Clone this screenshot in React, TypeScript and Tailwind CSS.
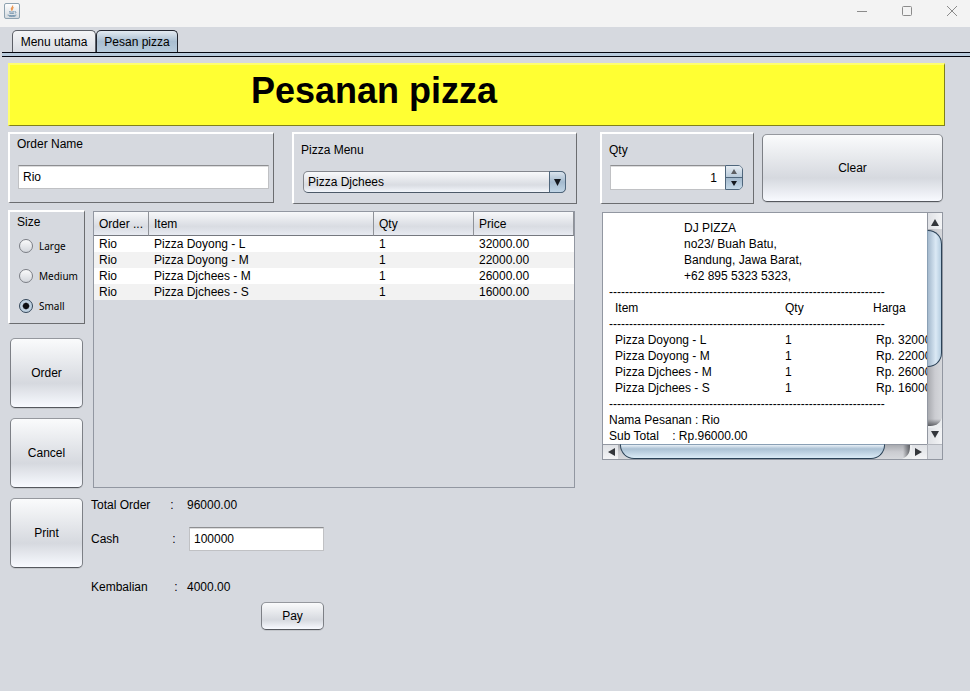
import { useState } from "react";
import type { ReactNode } from "react";

type Line = { item: string; price: string };

const lines: Line[] = [
  { item: "Pizza Doyong - L", price: "32000.00" },
  { item: "Pizza Doyong - M", price: "22000.00" },
  { item: "Pizza Djchees - M", price: "26000.00" },
  { item: "Pizza Djchees - S", price: "16000.00" },
];

const raised =
  "border-t-2 border-l-2 border-r border-b border-t-white border-l-white border-r-[#6b6d70] border-b-[#6b6d70]";

const field =
  "h-6 border border-[#c0c1c4] border-t-[#8d8e91] bg-white px-1 text-[12px] shadow-[inset_0_1px_0_#dcdcdd] outline-none";

function NimbusButton({ children, className }: { children: ReactNode; className: string }) {
  return (
    <button
      type="button"
      className={
        "rounded-[5px] border border-[#7d8086] border-t-[#95989e] border-b-[#55585e] bg-linear-to-b from-[#fafbfc] via-[#d6d9df] via-65% to-[#f8faff] shadow-[0_1px_0_#c3c6cb] " +
        className
      }
    >
      {children}
    </button>
  );
}

function JavaIcon() {
  return (
    <svg width="16" height="16" viewBox="0 0 16 16" aria-hidden="true">
      <defs>
        <linearGradient id="frame" x1="0" y1="0" x2="0" y2="1">
          <stop offset="0" stopColor="#ffffff" />
          <stop offset="1" stopColor="#d3d9de" />
        </linearGradient>
      </defs>
      <rect x=".5" y=".5" width="15" height="15" rx="1.5" fill="url(#frame)" stroke="#8ea2b0" />
      <path d="M8.6 2.4c.9 1.6-2.4 2.3-1.1 4.3.2.5.5.8.5.8M9.6 4.5c-1.6.9-1.8 1.5-.9 2.8" fill="none" stroke="#eb9550" strokeWidth="1.1" />
      <path d="M5 8.7c1.8.5 3.8.5 5.4 0M5.4 10.2c1.5.4 3.2.4 4.6 0M10.8 8.7c1.8-.2 1.6 1.1.1 1.6M3.6 12c2.4.9 6.2.9 8.8 0M5 13.2c2.3.3 4.6.3 6.4 0" fill="none" stroke="#6d8fa9" strokeWidth=".9" />
    </svg>
  );
}

function TitleBar() {
  return (
    <header className="flex h-[27px] items-start justify-between bg-[#f3f3f3] pt-[3px] pr-[13px] pl-1">
      <JavaIcon />
      <div className="flex gap-[35px] pt-[3px] text-[#8b8b8b]">
        <button type="button" aria-label="Minimize">
          <svg width="10" height="10" viewBox="0 0 10 10" stroke="currentColor"><path d="M0 5.5h10" /></svg>
        </button>
        <button type="button" aria-label="Maximize">
          <svg width="10" height="10" viewBox="0 0 10 10" fill="none" stroke="currentColor"><rect x=".5" y=".5" width="9" height="9" rx="1" /></svg>
        </button>
        <button type="button" aria-label="Close">
          <svg width="10" height="10" viewBox="0 0 10 10" stroke="currentColor"><path d="M0 0l10 10M10 0L0 10" /></svg>
        </button>
      </div>
    </header>
  );
}

function Tabs() {
  return (
    <nav className="pl-0.5">
      <div className="flex pt-[3px] pl-2.5" role="tablist">
        <button type="button" role="tab" aria-selected="false" className="h-[22px] w-[84px] rounded-t-[5px] border border-b-0 border-[#5b5e66] bg-linear-to-b from-[#f4f5f7] to-[#dadde3]">
          Menu utama
        </button>
        <button type="button" role="tab" aria-selected="true" className="h-[22px] w-[82px] rounded-t-[5px] border border-b-0 border-[#20242e] bg-linear-to-b from-[#e3eaf1] via-[#a9bed1] via-50% to-[#b8cbdc]">
          Pesan pizza
        </button>
      </div>
      <div className="h-[5px] border-y border-[#05060f] bg-[#b9cbdc]" />
    </nav>
  );
}

function SizePanel() {
  const [size, setSize] = useState("Small");
  return (
    <fieldset className={"h-[114px] pl-[7px] " + raised}>
      <legend className="float-left mt-[2px] w-full leading-4">Size</legend>
      <div className="clear-both flex flex-col gap-4 pt-[9px] pl-0.5">
        {["Large", "Medium", "Small"].map((s) => (
          <label key={s} className="flex h-3.5 items-center gap-1.5 font-['Noto_Sans',sans-serif] text-[10px]">
            <input
              type="radio"
              name="size"
              checked={size === s}
              onChange={() => setSize(s)}
              className="size-3.5 shrink-0 appearance-none rounded-full border border-[#7b7e85] bg-linear-to-b from-[#fafafb] to-[#d4d7dd] checked:border-[#34475a] checked:bg-radial checked:from-[#0b0d12] checked:from-30% checked:to-[#bfd1e1] checked:to-45%"
            />
            {s}
          </label>
        ))}
      </div>
    </fieldset>
  );
}

function OrderTable() {
  const head = "border-b border-[#75787f] pl-[5px] text-left font-normal";
  const divider = " border-r border-r-[#8f9298]";
  return (
    <div className="h-[277px] border border-[#9297a1]">
      <table className="w-full table-fixed border-separate border-spacing-0">
        <colgroup>
          <col className="w-[55px]" />
          <col />
          <col className="w-[100px]" />
          <col className="w-[100px]" />
        </colgroup>
        <thead>
          <tr className="h-6 bg-linear-to-b from-[#f7f8fa] via-[#d9dce2] via-60% to-[#e9ecf3]">
            <th className={head + divider}>Order ...</th>
            <th className={head + divider}>Item</th>
            <th className={head + divider}>Qty</th>
            <th className={head + divider}>Price</th>
          </tr>
        </thead>
        <tbody>
          {lines.map((l) => (
            <tr key={l.item} className="h-4 bg-white leading-4 even:bg-[#f2f2f2]">
              <td className="pl-[5px]">Rio</td>
              <td className="pl-[5px]">{l.item}</td>
              <td className="pl-[5px]">1</td>
              <td className="pl-[5px]">{l.price}</td>
            </tr>
          ))}
        </tbody>
      </table>
    </div>
  );
}

function PaymentForm() {
  return (
    <form className="-ml-0.5 grid w-[233px] grid-cols-[96px_1fr] items-center">
      <span className="h-[34px] whitespace-pre leading-[34px]">{"Total Order" + " ".repeat(6) + ":"}</span>
      <output className="leading-[34px]">96000.00</output>
      <label htmlFor="cash" className="h-[34px] whitespace-pre leading-[34px]">{"Cash" + " ".repeat(16) + ":"}</label>
      <input id="cash" defaultValue="100000" className={"ml-0.5 min-w-0 " + field} />
      <span className="h-[62px] whitespace-pre leading-[62px]">{"Kembalian" + " ".repeat(8) + ":"}</span>
      <output className="leading-[62px]">4000.00</output>
      <NimbusButton className="col-span-2 -mt-4 h-7 w-[63px] justify-self-end">Pay</NimbusButton>
    </form>
  );
}

function Arrow({ d }: { d: string }) {
  return (
    <svg width="15" height="16" viewBox="0 0 15 16" fill="#33363b" className="shrink-0" aria-hidden="true">
      <path d={d} />
    </svg>
  );
}

function Rule() {
  return <div>{"-".repeat(69)}</div>;
}

function Receipt() {
  const row = "grid grid-cols-[170px_88px_1fr] pl-1.5";
  return (
    <section aria-label="Receipt" className="mx-0.5 grid h-[248px] grid-cols-[minmax(0,1fr)_15px] grid-rows-[minmax(0,1fr)_15px] border border-[#9297a1]">
      <div className="overflow-hidden bg-white pt-[7px] pl-1.5 leading-4 whitespace-nowrap">
        <div className="pl-[75px]">
          <div>DJ PIZZA</div>
          <div>no23/ Buah Batu,</div>
          <div>Bandung, Jawa Barat,</div>
          <div>+62 895 5323 5323,</div>
        </div>
        <Rule />
        <div className={row}>
          <span>Item</span>
          <span>Qty</span>
          <span>Harga</span>
        </div>
        <Rule />
        {lines.map((l) => (
          <div key={l.item} className={row}>
            <span>{l.item}</span>
            <span>1</span>
            <span className="pl-[3px]">Rp. {l.price}</span>
          </div>
        ))}
        <Rule />
        <div>Nama Pesanan : Rio</div>
        <div className="whitespace-pre">{"Sub Total    : Rp.96000.00"}</div>
      </div>

      {/* vertical scroll bar */}
      <div className="flex flex-col border-l border-[#9297a1] bg-linear-to-r from-[#dfe1e5] to-[#f3f4f6]">
        <Arrow d="M7 6l4 7H3z" />
        <div className="flex flex-1 flex-col bg-linear-to-r from-[#a9abb0] via-[#cbccd1] via-50% to-[#d6d8dc]">
          <div className="mt-px -ml-px h-[137px] rounded-r-[14px] border border-[#2b4257] border-l-[#8aa0b5] bg-linear-to-r from-[#a4b9cd] via-[#dbe9f5] via-60% to-[#b5cde0]" />
          <div className="flex-1" />
          <svg width="14" height="14" viewBox="0 0 14 14" className="shrink-0" aria-hidden="true">
            <defs>
              <linearGradient id="vend" gradientUnits="userSpaceOnUse" x1="0" y1="5" x2="0" y2="13">
                <stop offset="0" stopColor="#505257" stopOpacity="0" />
                <stop offset="1" stopColor="#505257" />
              </linearGradient>
            </defs>
            <path d="M0 0h14v14H0z" fill="url(#vend)" />
            <path d="M0 12c7 0 11-1 14-8v10H0z" fill="#eceef0" />
          </svg>
        </div>
        <Arrow d="M3 3h8l-4 7z" />
      </div>

      {/* horizontal scroll bar */}
      <div className="flex border-t border-[#9297a1] bg-linear-to-b from-[#dfe1e5] to-[#f3f4f6]">
        <Arrow d="M5 7l7-4v8z" />
        <div className="flex flex-1 bg-linear-to-b from-[#a9abb0] via-[#cbccd1] via-50% to-[#d6d8dc]">
          <div className="-mt-px ml-0.5 w-[265px] rounded-b-[14px] border border-[#2b4257] border-t-[#8aa0b5] bg-linear-to-b from-[#e8f0f7] via-[#abc1d4] via-30% to-[#dbebf6]" />
          <div className="flex-1" />
          <svg width="14" height="14" viewBox="0 0 14 14" className="shrink-0" aria-hidden="true">
            <defs>
              <linearGradient id="hend" gradientUnits="userSpaceOnUse" x1="5" y1="0" x2="13" y2="0">
                <stop offset="0" stopColor="#505257" stopOpacity="0" />
                <stop offset="1" stopColor="#505257" />
              </linearGradient>
            </defs>
            <path d="M0 0h14v14H0z" fill="url(#hend)" />
            <path d="M12 0c0 7-1 11-8 14h10V0z" fill="#eceef0" />
          </svg>
        </div>
        <Arrow d="M3 3l7 4-7 4z" />
      </div>
      <div className="border-t border-l border-[#b4b7be]" />
    </section>
  );
}

export default function App() {
  return (
    <div className="min-h-screen bg-[#d6d9df] font-['Liberation_Sans',Arial,sans-serif] text-[12px] text-black">
      <TitleBar />
      <Tabs />
      <main className="flex flex-col gap-1.5 pt-1.5 pr-[25px] pl-2">
        <div className="h-[63px] border-t-2 border-r border-b border-l-2 border-t-[#ffff70] border-r-[#80801a] border-b-[#80801a] border-l-[#ffff70] bg-[#ffff33] pl-[241px]">
          <h1 className="text-[36px] leading-[52px] font-bold">Pesanan pizza</h1>
        </div>

        <div className="grid grid-cols-[569fr_345fr] gap-x-[23px]">
          <div className="flex flex-col gap-1.5">
            <div className="grid grid-cols-[266fr_285fr] gap-[18px]">
              <div className={"flex h-[71px] flex-col pr-1 pl-[7px] " + raised}>
                <label htmlFor="name" className="pt-0.5 leading-4">Order Name</label>
                <input id="name" defaultValue="Rio" className={"mt-[13px] ml-px " + field} />
              </div>
              <div className={"flex h-[72px] flex-col pr-2.5 pl-[7px] " + raised}>
                <label htmlFor="menu" className="pt-2 leading-4">Pizza Menu</label>
                <div className="relative mt-[13px] ml-0.5">
                  <select id="menu" className="block h-[22px] w-full appearance-none rounded-[5px] border border-[#83868d] border-b-[#4d5a68] bg-linear-to-b from-[#f8f9fb] via-[#d9dce2] via-65% to-[#f3f6fb] px-1 text-[12px]">
                    <option>Pizza Djchees</option>
                    <option>Pizza Doyong</option>
                  </select>
                  <span className="pointer-events-none absolute inset-y-0 right-0 flex w-[17px] items-center justify-center rounded-r-[5px] border border-[#4f667c] bg-linear-to-b from-[#dae4ed] via-[#a4bace] via-50% to-[#c2d6e6]">
                    <svg width="7" height="7" viewBox="0 0 7 7" fill="#14181e" aria-hidden="true"><path d="M0 0h7L3.5 7z" /></svg>
                  </span>
                </div>
              </div>
            </div>

            <div className="grid grid-cols-[77px_minmax(0,1fr)] gap-x-2 pr-0.5">
              <div className="flex flex-col gap-[10px]">
                <SizePanel />
                <div className="mx-0.5 mt-1 flex flex-col gap-2.5">
                  <NimbusButton className="h-[70px]">Order</NimbusButton>
                  <NimbusButton className="h-[70px]">Cancel</NimbusButton>
                  <NimbusButton className="h-[70px]">Print</NimbusButton>
                </div>
              </div>
              <div className="pt-px">
                <OrderTable />
                <PaymentForm />
              </div>
            </div>
          </div>

          <div className="flex flex-col gap-2">
            <div className="grid grid-cols-[minmax(0,154fr)_minmax(0,181fr)] gap-2 pr-0.5">
              <div className={"flex h-[72px] flex-col pr-2.5 pl-[7px] " + raised}>
                <label htmlFor="qty" className="pt-2 leading-4">Qty</label>
                <div className="mt-[7px] ml-px flex h-[25px]">
                  <input id="qty" inputMode="numeric" defaultValue="1" className="min-w-0 flex-1 border border-r-0 border-[#c0c1c4] border-t-[#8d8e91] bg-white pr-2 text-right text-[12px] shadow-[inset_0_1px_0_#dcdcdd] outline-none" />
                  <div className="flex w-[18px] flex-col overflow-hidden rounded-r-[5px] border border-[#4f667c]">
                    <button type="button" aria-label="Increase" className="flex flex-1 items-center justify-center border-b border-[#4f667c] bg-linear-to-b from-[#e6ecf2] to-[#b9cbdb]">
                      <svg width="6" height="5" viewBox="0 0 6 5" fill="#5d5f63"><path d="M3 0l3 5H0z" /></svg>
                    </button>
                    <button type="button" aria-label="Decrease" className="flex flex-1 items-center justify-center bg-linear-to-b from-[#a4bace] to-[#c5d9e8]">
                      <svg width="6" height="5" viewBox="0 0 6 5" fill="#14181e"><path d="M0 0h6L3 5z" /></svg>
                    </button>
                  </div>
                </div>
              </div>
              <NimbusButton className="mt-0.5 h-[68px]">Clear</NimbusButton>
            </div>
            <Receipt />
          </div>
        </div>
      </main>
    </div>
  );
}
